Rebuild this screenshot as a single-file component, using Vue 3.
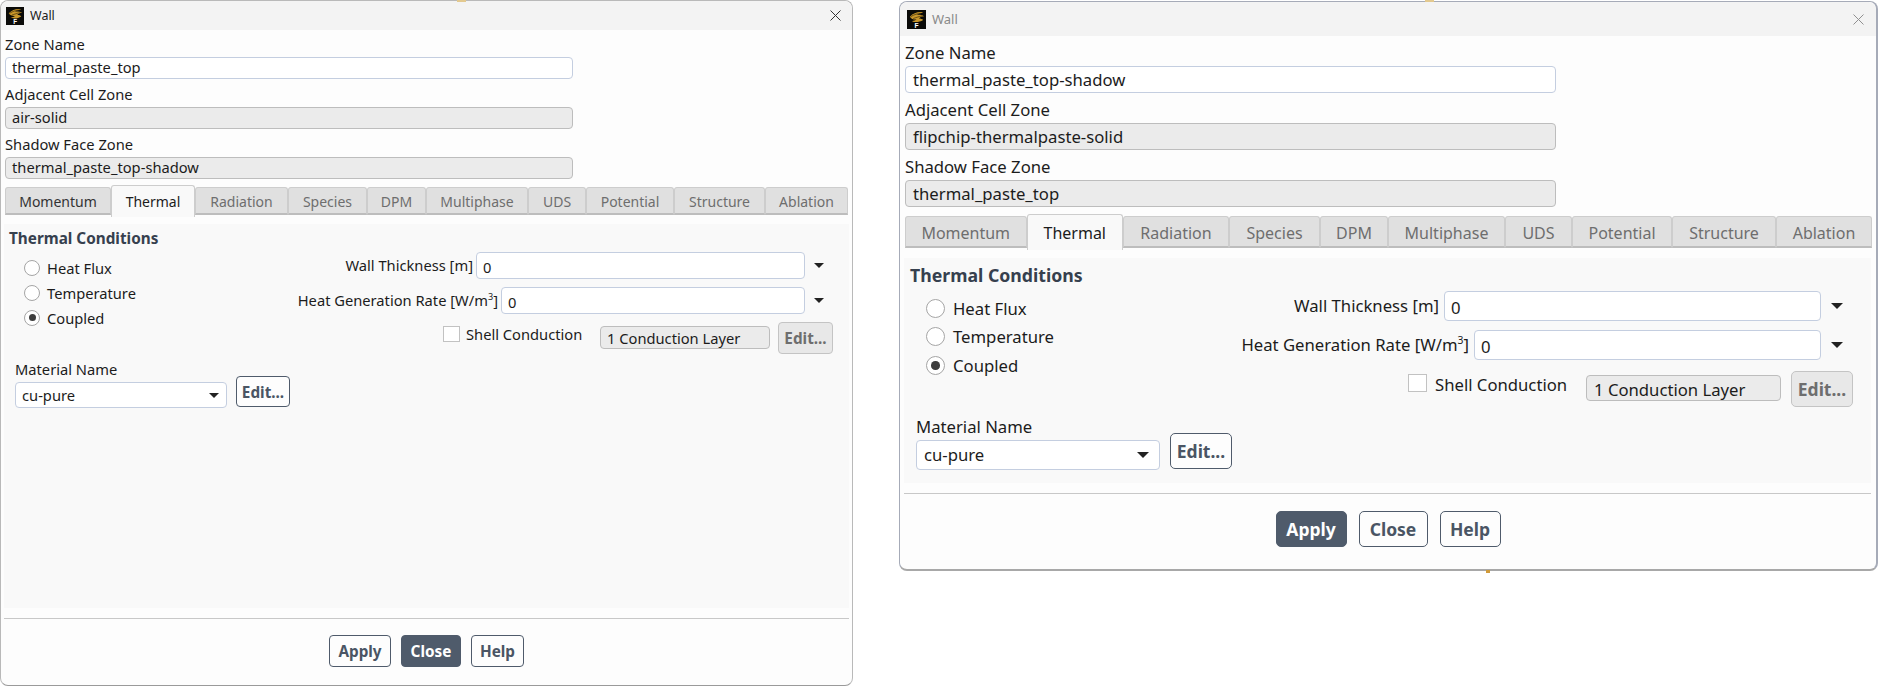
<script setup>
const tabs = ['Momentum', 'Thermal', 'Radiation', 'Species', 'DPM', 'Multiphase', 'UDS', 'Potential', 'Structure', 'Ablation']
const radios = [
  { label: 'Heat Flux', on: false },
  { label: 'Temperature', on: false },
  { label: 'Coupled', on: true },
]
const windows = [
  {
    cls: 'win-a',
    zones: [
      { label: 'Zone Name', value: 'thermal_paste_top', ro: false },
      { label: 'Adjacent Cell Zone', value: 'air-solid', ro: true },
      { label: 'Shadow Face Zone', value: 'thermal_paste_top-shadow', ro: true },
    ],
    primary: 'Close',
  },
  {
    cls: 'win-b',
    zones: [
      { label: 'Zone Name', value: 'thermal_paste_top-shadow', ro: false },
      { label: 'Adjacent Cell Zone', value: 'flipchip-thermalpaste-solid', ro: true },
      { label: 'Shadow Face Zone', value: 'thermal_paste_top', ro: true },
    ],
    primary: 'Apply',
  },
]
const actions = ['Apply', 'Close', 'Help']
</script>

<template>
  <div class="page">
    <i class="peek peek-a"></i>
    <i class="peek peek-b"></i>
    <i class="peek peek-c"></i>
    <section v-for="w in windows" :key="w.cls" class="win" :class="w.cls">
      <header class="title">
        <svg class="logo" viewBox="0 0 20 20" aria-hidden="true">
          <rect width="20" height="20" fill="#0a0a08" />
          <path d="M3 7 C7 3 12 1.5 17 2.5 C14 3.2 12 4 10 5 C13 4.8 16 5.2 18 6.5 C15 6.8 13.5 7.6 12.5 9 C14.5 9 16 9.6 17 10.5 C13 13 8 13.5 5 11.5 C7 11.6 9 11 10 10 C7 10.3 4.5 9.2 3 7 Z" fill="#c8962a" />
          <path d="M4 7 C8 4.5 11 3.8 15 3.4 M6.5 9 C9.5 8 12 7 16 6.2" stroke="#3a2a08" stroke-width="0.7" fill="none" />
          <text x="8" y="19" class="logo-f">F</text>
        </svg>
        <span class="title-text">Wall</span>
        <svg class="x" viewBox="0 0 11 11" aria-hidden="true">
          <path d="M0.5 0.5 L10.5 10.5 M10.5 0.5 L0.5 10.5" fill="none" stroke="currentColor" stroke-width="1" />
        </svg>
      </header>

      <div class="zones">
        <div v-for="z in w.zones" :key="z.label" class="zone">
          <label class="lbl">{{ z.label }}</label>
          <div class="field" :class="{ ro: z.ro }">{{ z.value }}</div>
        </div>
      </div>

      <nav class="tabs">
        <div v-for="t in tabs" :key="t" class="tab" :class="{ active: t === 'Thermal' }">{{ t }}</div>
      </nav>

      <div class="panel">
        <h3 class="heading">Thermal Conditions</h3>
        <div class="cond">
          <div class="radios">
            <div v-for="r in radios" :key="r.label" class="radio-row">
              <span class="radio" :class="{ on: r.on }"></span>
              <span>{{ r.label }}</span>
            </div>
          </div>
          <div class="props">
            <div class="row">
              <span class="prop-lbl">Wall Thickness [m]</span>
              <div class="field val w1">0</div>
              <span class="arrow-box"><i class="arrow"></i></span>
            </div>
            <div class="row">
              <span class="prop-lbl">Heat Generation Rate [W/m<sup>3</sup>]</span>
              <div class="field val w2">0</div>
              <span class="arrow-box"><i class="arrow"></i></span>
            </div>
            <div class="row shell">
              <span class="check"></span>
              <span class="shell-lbl">Shell Conduction</span>
              <div class="field ro layer">1 Conduction Layer</div>
              <button class="btn edit disabled">Edit...</button>
            </div>
          </div>
        </div>
        <div class="material">
          <div class="mat-col">
            <label class="lbl">Material Name</label>
            <div class="field select">cu-pure<i class="arrow"></i></div>
          </div>
          <button class="btn edit mat-edit">Edit...</button>
        </div>
      </div>

      <div class="sep"></div>
      <footer class="actions">
        <button v-for="a in actions" :key="a" class="btn act" :class="[a.toLowerCase(), { primary: a === w.primary }]">{{ a }}</button>
      </footer>
    </section>
  </div>
</template>

<style scoped>
.page {
  position: relative;
  display: flex;
  align-items: flex-start;
  width: 1881px;
  height: 686px;
  overflow: hidden;
  background: #fff;
  font-family: "Noto Sans", "Liberation Sans", sans-serif;
  color: #1c1c1c;
}
.peek { position: absolute; z-index: 1; display: block; height: 2px; }
.peek-a { left: 457px; top: 0; width: 9px; background: #e3c98f; }
.peek-b { left: 1425px; top: 0; width: 9px; background: #e3c98f; }
.peek-c { left: 1486px; top: 570px; width: 4px; height: 3px; background: #d09a3a; }
.win {
  box-sizing: border-box;
  display: flex;
  flex-direction: column;
  flex: none;
  background: #fdfdfd;
  border: 1px solid #b4b6bb;
}
.win-a {
  --ml: 3px;
  --mr: 3px;
  width: 853px;
  height: 686px;
  font-size: 14.7px;
  border-radius: 8px;
  border-color: #b9b9b9;
  border-bottom-color: #9a9a9a;
}
.win-b {
  --ml: 4px;
  --mr: 5px;
  width: 979px;
  height: 570px;
  margin: 1px 0 0 46px;
  font-size: 16.7px;
  border-radius: 8px;
  border-color: #a6abb8;
  border-width: 1px 2px 2px 1px;
  border-bottom-color: #a8a8a8;
}

/* title bar */
.title {
  display: flex;
  align-items: center;
  flex: none;
  background: #f3f3f3;
  border-radius: 8px 8px 0 0;
}
.win-a .title { height: 29px; padding: 0 11px 0 5px; font-size: 12.5px; }
.win-b .title { height: 34px; padding: 0 12px 0 7px; font-size: 13px; }
.logo { flex: none; display: block; }
.win-a .logo { width: 18px; height: 18px; }
.win-b .logo { width: 19px; height: 19px; }
.logo-f { font: bold 7px "Liberation Sans", sans-serif; fill: #fff; }
.title-text { flex: 1; margin-left: 6px; }
.win-b .title-text { color: #8a8a8a; }
.x { flex: none; width: 11px; height: 11px; }
.win-a .x { color: #333; }
.win-b .x { color: #909090; }

/* zone fields */
.zones { flex: none; }
.win-a .zones { margin: 0 0 0 4px; padding-top: 5px; }
.win-b .zones { margin: 0 0 0 5px; padding-top: 6px; }
.zone { display: flex; flex-direction: column; align-items: flex-start; }
.lbl { display: block; white-space: nowrap; }
.win-a .lbl { line-height: 19px; margin-bottom: 3px; }
.win-b .lbl { line-height: 21px; margin-bottom: 3px; }
.win-a .zone { margin-bottom: 6px; }
.win-b .zone { margin-bottom: 6px; }
.field {
  box-sizing: border-box;
  background: #fff;
  border: 1px solid #c4cee0;
  border-radius: 4px;
  white-space: nowrap;
}
.field.ro { background: #ebebeb; border-color: #bdbdbd; }
.win-a .field { height: 22px; line-height: 19px; padding-left: 6px; }
.win-b .field { height: 27px; line-height: 26px; padding-left: 7px; }
.win-a .zone .field { width: 568px; }
.win-b .zone .field { width: 651px; }

/* tabs */
.tabs { display: grid; flex: none; }
.win-a .tabs {
  grid-template-columns: 106px 84px 93px 79px 59px 102px 58px 88px 91px 83px;
  height: 28px;
  margin: 2px 0 0 4px;
  width: 843px;
  font-size: 14px;
}
.win-b .tabs {
  grid-template-columns: 121.5px 96.5px 106px 91px 68px 117px 67px 100px 104px 96px;
  height: 32px;
  margin: 3px 0 0 5px;
  width: 967px;
  font-size: 16px;
}
.tab {
  box-sizing: border-box;
  display: flex;
  align-items: center;
  justify-content: center;
  padding-top: 2px;
  background: #e0e0e0;
  color: #6e6e6e;
  border: 1px solid #cdcdcd;
  border-bottom: 2px solid #bdbdbd;
  border-radius: 3px 3px 0 0;
  white-space: nowrap;
}
.tab:first-child { color: #333; }
.win-b .tab:first-child { color: #6e6e6e; }
.tab.active {
  position: relative;
  background: #f9f9f9;
  color: #1c1c1c;
  border-bottom: none;
  margin: -2px 0;
  padding-top: 0;
}

/* panel */
.panel {
  flex: 1;
  background: #f9f9f9;
  margin-left: var(--ml);
  margin-right: var(--mr);
}
.win-a .panel { margin-top: 9px; padding-top: 4px; }
.win-b .panel { margin-top: 10px; padding-top: 6px; }
.heading { margin: 0; font-weight: 700; color: #36404e; }
.win-a .heading { font-size: 15.3px; line-height: 20px; margin-left: 5px; }
.win-b .heading { font-size: 17.7px; line-height: 22px; margin-left: 6px; }
.cond { display: flex; justify-content: space-between; align-items: flex-start; }
.win-a .cond { margin-top: 4px; height: 103px; padding-right: 16px; }
.win-b .cond { margin-top: 5px; height: 117px; padding-right: 18px; }
.win-a .radios { margin: 3px 0 0 20px; }
.win-b .radios { margin: 3px 0 0 22px; }
.radio-row { display: flex; align-items: center; white-space: nowrap; }
.win-a .radio-row { height: 25px; gap: 7px; }
.win-b .radio-row { height: 28.5px; gap: 8px; }
.radio {
  box-sizing: border-box;
  display: flex;
  align-items: center;
  justify-content: center;
  background: #fff;
  border: 1px solid #a5a5a5;
  border-radius: 50%;
}
.win-a .radio { width: 16px; height: 16px; }
.win-b .radio { width: 19px; height: 19px; }
.radio.on::after { content: ""; display: block; width: 50%; height: 50%; border-radius: 50%; background: #3d3d3d; }

.props { display: flex; flex-direction: column; align-items: flex-end; }
.win-a .props { gap: 8px; }
.win-b .props { gap: 9px; }
.row { display: flex; align-items: center; justify-content: flex-end; }
.prop-lbl { white-space: nowrap; align-self: flex-start; }
.win-a .prop-lbl { margin-right: 3px; line-height: 26px; }
.win-b .prop-lbl { margin-right: 5px; line-height: 30px; }
sup { font-size: 62%; line-height: 0; }
.win-a .val { height: 27px; line-height: 28px; }
.win-b .val { height: 30px; line-height: 31px; padding-left: 6px; }
.win-a .w1 { width: 329px; }
.win-a .w2 { width: 304px; }
.win-b .w1 { width: 377px; }
.win-b .w2 { width: 347px; }
.arrow-box { display: flex; justify-content: center; }
.win-a .arrow-box { width: 28px; }
.win-b .arrow-box { width: 32px; }
.arrow {
  display: block;
  width: 0;
  height: 0;
  border-style: solid;
  border-color: #222 transparent transparent;
}
.win-a .arrow { border-width: 5px 5.5px 0; }
.win-b .arrow { border-width: 6px 6px 0; }
.shell { align-items: flex-start; }
.win-b .shell { margin-top: 2px; }
.check { box-sizing: border-box; flex: none; background: #fff; border: 1px solid #c2c2c2; }
.win-a .check { width: 17px; height: 16px; margin-top: 4px; }
.win-b .check { width: 19px; height: 18px; margin-top: 3px; }
.shell-lbl { flex: none; white-space: nowrap; }
.win-a .shell-lbl { width: 134px; margin-left: 6px; line-height: 25px; }
.win-b .shell-lbl { width: 151px; margin-left: 8px; line-height: 28px; }
.win-a .layer { width: 170px; height: 23px; line-height: 23px; margin-top: 4px; }
.win-b .layer { width: 195px; height: 26px; line-height: 27px; margin-top: 4px; }

.btn {
  box-sizing: border-box;
  display: block;
  padding: 0;
  font-family: inherit;
  font-weight: 700;
  color: #4a5564;
  background: #fdfdfd;
  border: 1px solid #4f5b6b;
  text-align: center;
}
.win-a .btn { border-radius: 4px; font-size: 15.3px; }
.win-b .btn { border-radius: 5px; font-size: 17.5px; }
.btn.primary { background: #4f5b6b; color: #fff; }
.btn.disabled { background: #e8e8e8; border-color: #c4c4c4; color: #6e6e6e; }
.win-a .edit { width: 55px; height: 32px; margin-left: 8px; }
.win-b .edit { width: 62px; height: 36px; margin-left: 10px; }

.material { display: flex; align-items: flex-end; }
.win-a .material { margin: 5px 0 0 11px; }
.win-b .material { margin: 8px 0 0 12px; }
.mat-col { display: flex; flex-direction: column; align-items: flex-start; }
.select { display: flex; align-items: center; justify-content: space-between; }
.win-a .select { width: 212px; height: 26px; padding-right: 7px; }
.win-b .select { width: 244px; height: 30px; padding-right: 10px; }
.win-a .mat-edit { width: 54px; height: 31px; margin: 0 0 1px 9px; }
.win-b .mat-edit { width: 62px; height: 36px; margin: 0 0 1px 10px; }

/* footer */
.sep { flex: none; height: 1px; background: #c8c8c8; margin-left: var(--ml); margin-right: var(--mr); }
.actions { display: flex; flex: none; justify-content: center; }
.win-a .actions { height: 66px; gap: 10px; padding-top: 16px; box-sizing: border-box; }
.win-b .actions { height: 75px; gap: 12px; padding-top: 17px; box-sizing: border-box; }
.win-a .sep { margin-top: 10px; }
.win-b .sep { margin-top: 10px; }
.win-a .act { height: 32px; }
.win-b .act { height: 36px; }
.win-a .apply { width: 62px; }
.win-a .close { width: 60px; }
.win-a .help { width: 53px; }
.win-b .apply { width: 71px; }
.win-b .close { width: 69px; }
.win-b .help { width: 61px; }
</style>
